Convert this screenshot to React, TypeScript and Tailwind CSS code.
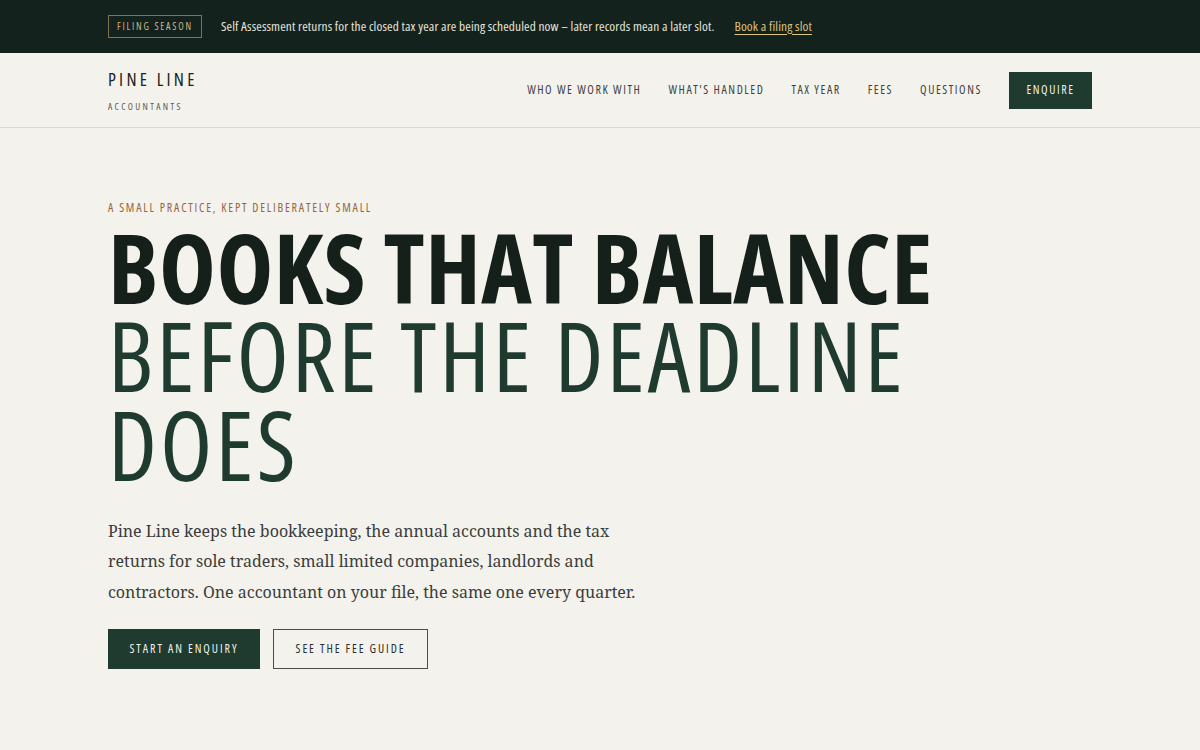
const nav = ["Who we work with", "What's handled", "Tax year", "Fees", "Questions"];

export default function App() {
  return (
    <div className="min-h-screen bg-[#f4f2ed] font-['Open_Sans',sans-serif] font-stretch-[75%] text-[#16201b]">
      {/* filing notice */}
      <div className="bg-[#13221c] text-[#e6e4dc]">
        <div className="mx-auto flex h-[53px] max-w-[1080px] items-center px-12">
          <span className="border border-[#7f7452] px-[8px] py-[3px] text-[10px] font-medium uppercase tracking-[0.18em] text-[#cbb882]">
            Filing season
          </span>
          <p className="ml-[19px] text-[13.3px] tracking-[0.01em]">
            Self Assessment returns for the closed tax year are being scheduled now – later records mean a later slot.
          </p>
          <a href="#" className="ml-[20px] text-[13.3px] tracking-[0.01em] text-[#dcc47f] underline underline-offset-[3px]">
            Book a filing slot
          </a>
        </div>
      </div>

      <header className="border-b border-[#dcd9d0]">
        <div className="mx-auto flex h-[74px] max-w-[1080px] items-center justify-between px-12">
          <div className="flex flex-col pt-[2px]">
            <span className="text-[18px] uppercase leading-none tracking-[0.18em] text-[#1c2420]">Pine Line</span>
            <span className="mt-[14px] text-[9.5px] uppercase leading-none tracking-[0.25em] text-[#555a56]">Accountants</span>
          </div>
          <nav className="flex items-center">
            {nav.map((n) => (
              <a key={n} href="#" className="mr-[27px] text-[12px] uppercase tracking-[0.13em] text-[#3e4240]">
                {n}
              </a>
            ))}
            <a href="#" className="flex h-[37px] w-[83px] items-center justify-center bg-[#1f3a2e] text-[12px] font-medium uppercase tracking-[0.13em] text-[#eef0ea]">
              Enquire
            </a>
          </nav>
        </div>
      </header>

      <main className="mx-auto max-w-[1080px] px-12 pt-[71px]">
        <p className="text-[12px] uppercase tracking-[0.15em] text-[#98653d]">A small practice, kept deliberately small</p>
        <h1 className="mt-[6px] text-[96px] uppercase leading-[0.92]">
          <span className="block font-bold tracking-[0.005em] text-[#16201b]">Books that balance</span>
          <span className="block font-normal tracking-[0.03em] text-[#1f3a2e]">Before the deadline does</span>
        </h1>
        <p className="mt-[28px] max-w-[540px] font-['Noto_Serif',serif] font-stretch-normal text-[16px] leading-[30.5px] text-[#3a3d3b]">
          Pine Line keeps the bookkeeping, the annual accounts and the tax returns for sole traders, small limited
          companies, landlords and contractors. One accountant on your file, the same one every quarter.
        </p>
        <div className="mt-[22px] flex gap-[13px]">
          <a href="#" className="flex h-[40px] w-[152px] items-center justify-center bg-[#1f3a2e] text-[12px] font-medium uppercase tracking-[0.16em] text-[#eef0ea]">
            Start an enquiry
          </a>
          <a href="#" className="flex h-[40px] w-[155px] items-center justify-center border border-[#4a4f4c] text-[12px] uppercase tracking-[0.16em] text-[#2a2f2c]">
            See the fee guide
          </a>
        </div>
      </main>
    </div>
  );
}
